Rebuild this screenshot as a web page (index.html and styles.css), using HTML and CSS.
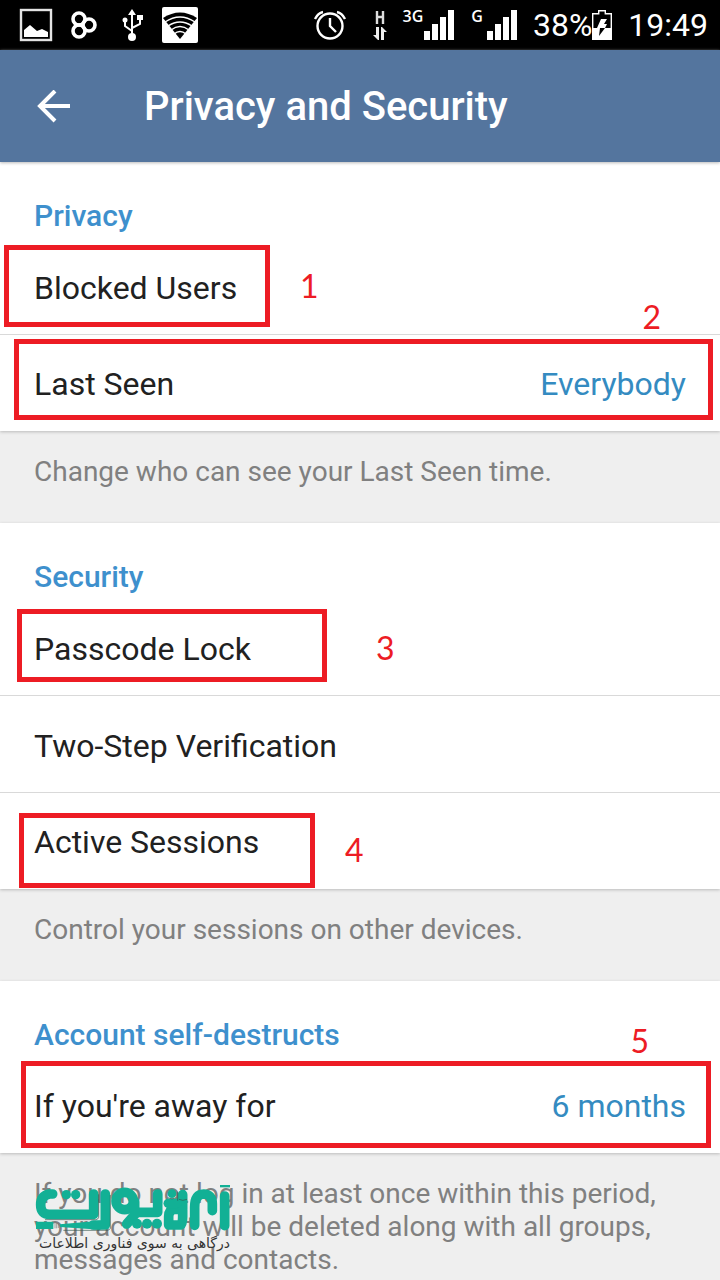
FILE: index.html
```
<!DOCTYPE html>
<html lang="en">
<head>
<meta charset="utf-8">
<meta name="viewport" content="width=device-width, initial-scale=1">
<title>Privacy and Security</title>
<link rel="stylesheet" href="styles.css">
</head>
<body>
<div class="status">
  <div class="status-left">
    <svg width="34" height="34" viewBox="0 0 34 34"><rect x="2" y="2" width="30" height="30" fill="none" stroke="#e4e4e4" stroke-width="2.4"/><path d="M5 29v-7l6-5 7 6 5-2 6 3v5z" fill="#fff"/></svg>
    <svg width="28" height="28" viewBox="0 0 28 28" fill="none" stroke="#fff" stroke-width="3.600"><circle cx="10" cy="8" r="6"/><circle cx="20" cy="14" r="6"/><circle cx="10" cy="20" r="6"/></svg>
    <svg class="usb" width="22" height="34" viewBox="0 0 22 34" fill="none" stroke="#fff" stroke-width="2"><path d="M11 28V5M11 23L4 18V13M11 20l8-4V9"/><path d="M11 1l4 6H7z" fill="#fff" stroke="none"/><circle cx="11" cy="29" r="4" fill="#fff" stroke="none"/><circle cx="4" cy="12" r="2.500" fill="#fff" stroke="none"/><path d="M16 7h6v5h-6z" fill="#fff" stroke="none"/></svg>
    <svg width="36" height="36" viewBox="0 0 36 36"><rect width="36" height="36" rx="2" fill="#fff"/><path d="M1 11Q18 0 35 11L18 32z" fill="#000"/><path d="M3 15Q18 5 33 15M6 19Q18 11 30 19M9 23Q18 16 27 23M12 27Q18 22 24 27" fill="none" stroke="#fff" stroke-width="1.400"/></svg>
  </div>
  <div class="status-right">
    <svg class="alarm" width="34" height="32" viewBox="0 0 34 32" fill="none" stroke="#fff" stroke-width="2.400"><circle cx="17" cy="17" r="12.500"/><path d="M17 9v8l6 6M2 10Q5 4 10 3M32 10Q29 4 24 3"/></svg>
    <svg class="data" width="14" height="32" viewBox="0 0 14 32" fill="none" stroke="#ddd" stroke-width="2.400"><path d="M4 2v13M10 2v13M4 8h6"/><path d="M3 18h3v13H5L0 26h3zM8 31V18h1l5 5h-3v8z" fill="#eee" stroke="none"/></svg>
    <span class="net">3G</span>
    <svg class="bars" width="30" height="30" viewBox="0 0 30 30" fill="#fff"><path d="M0 21h6v9H0zM8 14h6v16H8zM16 7h6v23h-6zM24 0h6v30h-6z"/></svg>
    <span class="net net-second">G</span>
    <svg class="bars" width="30" height="30" viewBox="0 0 30 30" fill="#fff"><path d="M0 21h6v9H0zM8 14h6v16H8zM16 7h6v23h-6zM24 0h6v30h-6z"/></svg>
    <span class="level">38%</span>
    <svg width="20" height="30" viewBox="0 0 20 30"><path d="M.700 3.700H6.700V.700H13.300V3.700H19.300V29.300H.700z" fill="none" stroke="#fff" stroke-width="1.400"/><path d="M0 18h20v12H0z" fill="#fff"/><path d="M9 9h6l-3 5h3l-2 4H5z" fill="#fff"/><path d="M8 18h5L7 26z" fill="#000"/></svg>
    <time class="clock">19:49</time>
  </div>
</div>
<header class="bar">
  <button class="back" aria-label="Back"><svg width="34" height="34" viewBox="0 0 34 34" fill="none" stroke="#fff" stroke-width="4"><path d="M33 16H4M18 1L3 16l15 15"/></svg></button>
  <h1 class="title">Privacy and Security</h1>
</header>
<main>
  <section class="card">
    <h2 class="heading">Privacy</h2>
    <button class="row"><span>Blocked Users</span><span class="mark mark-1"></span><span class="num num-1">1</span></button>
    <button class="row"><span>Last Seen</span><span class="value">Everybody</span><span class="mark mark-2"></span><span class="num num-2">2</span></button>
  </section>
  <p class="info">Change who can see your Last Seen time.</p>
  <section class="card">
    <h2 class="heading">Security</h2>
    <button class="row"><span>Passcode Lock</span><span class="mark mark-3"></span><span class="num num-3">3</span></button>
    <button class="row"><span>Two-Step Verification</span></button>
    <button class="row"><span>Active Sessions</span><span class="mark mark-4"></span><span class="num num-4">4</span></button>
  </section>
  <p class="info">Control your sessions on other devices.</p>
  <section class="card">
    <h2 class="heading">Account self-destructs</h2>
    <button class="row"><span>If you're away for</span><span class="value">6 months</span><span class="mark mark-5"></span><span class="num num-5">5</span></button>
  </section>
  <div class="last">
    <p class="info">If you do not log in at least once within this period, your account will be deleted along with all groups, messages and contacts.</p>
    <div class="brand">
      <svg class="logo" width="200" height="50" viewBox="99 69 600 150">
        <g fill="none" stroke="#12b095" stroke-width="29" stroke-linecap="round" stroke-linejoin="round">
          <path d="M158 102H148Q122 108 122 134Q122 163 148 163H281V102"/>
          <path d="M316 102V195H280"/>
          <circle cx="374" cy="123" r="26"/>
          <path d="M404 125V157H473V102M380 192L406 162"/>
          <path d="M548 104V148H522Q506 150 506 170V195H542Q548 192 548 170V150"/>
          <path d="M505 130H530"/>
          <path d="M584 196V142Q584 103 611 102Q637 103 637 132V152M674 108V197"/>
        </g>
        <g fill="#12b095">
          <path d="M108 185h52v22h-52zM180 193L300 182V209L180 201z"/>
          <path d="M660 75h30v7h-30z"/>
          <circle cx="199" cy="104" r="14"/><circle cx="227" cy="104" r="14"/>
          <circle cx="411" cy="191" r="15"/><circle cx="441" cy="191" r="15"/><circle cx="471" cy="191" r="15"/>
          <circle cx="516" cy="101" r="13"/>
        </g>
        <path d="M503 113Q516 120 529 113M533 95V122M537 118Q548 124 561 118M296 103V172Q294 179 287 179H135M331 105V205Q329 210 322 211H190" fill="none" stroke="#34544d" stroke-width="2"/>
        <path d="M165 187v18M170 187v18M175 190v14" stroke="#777" stroke-width="2"/>
      </svg>
      <p class="tagline" lang="fa" dir="rtl">درگاهی به سوی فناوری اطلاعات</p>
    </div>
  </div>
</main>
</body>
</html>
```
FILE: styles.css
```
* { box-sizing: border-box; }
body { margin: 0; background: #efefef; font-family: Roboto, "Liberation Sans", sans-serif; font-size: 32px; color: #212121; }
h1, h2, p { margin: 0; }
button { border: 0; padding: 0; background: none; font: inherit; color: inherit; text-align: left; }
.status { display: flex; justify-content: space-between; align-items: center; height: 50px; padding: 0 12px 0 19px; background: #000; color: #fff; }
.status-left, .status-right { display: flex; align-items: center; }
.status-left { gap: 16px; }
.usb { margin: 0 3px 0 8px; }
.alarm { margin-right: 26px; }
.data { margin-right: 16px; }
.net { align-self: flex-start; margin-right: 1px; font: 600 16px/20px "Open Sans", sans-serif; }
.net-second { margin-left: 17px; margin-right: 4px; }
.level { margin-left: 16px; }
.clock { margin-left: 16px; }
.bar { position: relative; z-index: 1; display: flex; align-items: center; gap: 73px; height: 112px; padding: 2px 0 0 37px; background: #54759e; color: #fff; box-shadow: 0 1px 3px #bbb; }
.back { display: flex; }
.title { font-size: 40px; font-weight: 500; line-height: 48px; }
.card { background: #fff; box-shadow: 0 1px 3px #bbb; }
.heading { padding: 34px 34px 2px; font-size: 30px; font-weight: 500; line-height: 40px; color: #3e90cd; }
.row { position: relative; display: flex; justify-content: space-between; align-items: center; width: 100%; height: 97px; padding: 3px 34px 0; border-bottom: 1px solid #d9d9d9; }
.row:last-child { height: 96px; padding-top: 1px; border-bottom: 0; }
.value { color: #348bc1; }
.mark { position: absolute; border: 5px solid #ed1c24; }
.mark-1 { left: 4px; top: 7px; width: 266px; height: 82px; }
.mark-2 { left: 14px; right: 7px; top: 4px; height: 81px; }
.mark-3 { left: 17px; top: 10px; width: 310px; height: 73px; }
.mark-4 { left: 19px; top: 20px; width: 296px; height: 75px; }
.mark-5 { left: 21px; right: 9px; top: 4px; height: 87px; }
.num { position: absolute; font: 32px/40px Lato, "Noto Sans", sans-serif; color: #ed1c24; }
.num-1 { left: 300px; top: 28px; }
.num-2 { right: 59px; top: -38px; }
.num-3 { left: 376px; top: 29px; }
.num-4 { left: 345px; top: 37px; }
.num-5 { right: 71px; top: -36px; }
.info { padding: 24px 34px 35px; font-size: 28px; line-height: 33px; color: #808080; }
.last { position: relative; }
.brand { position: absolute; left: 33px; top: 30px; width: 197px; }
.logo { display: block; }
.tagline { font: 14px/20px "DejaVu Sans", sans-serif; color: #333; white-space: nowrap; }
```
